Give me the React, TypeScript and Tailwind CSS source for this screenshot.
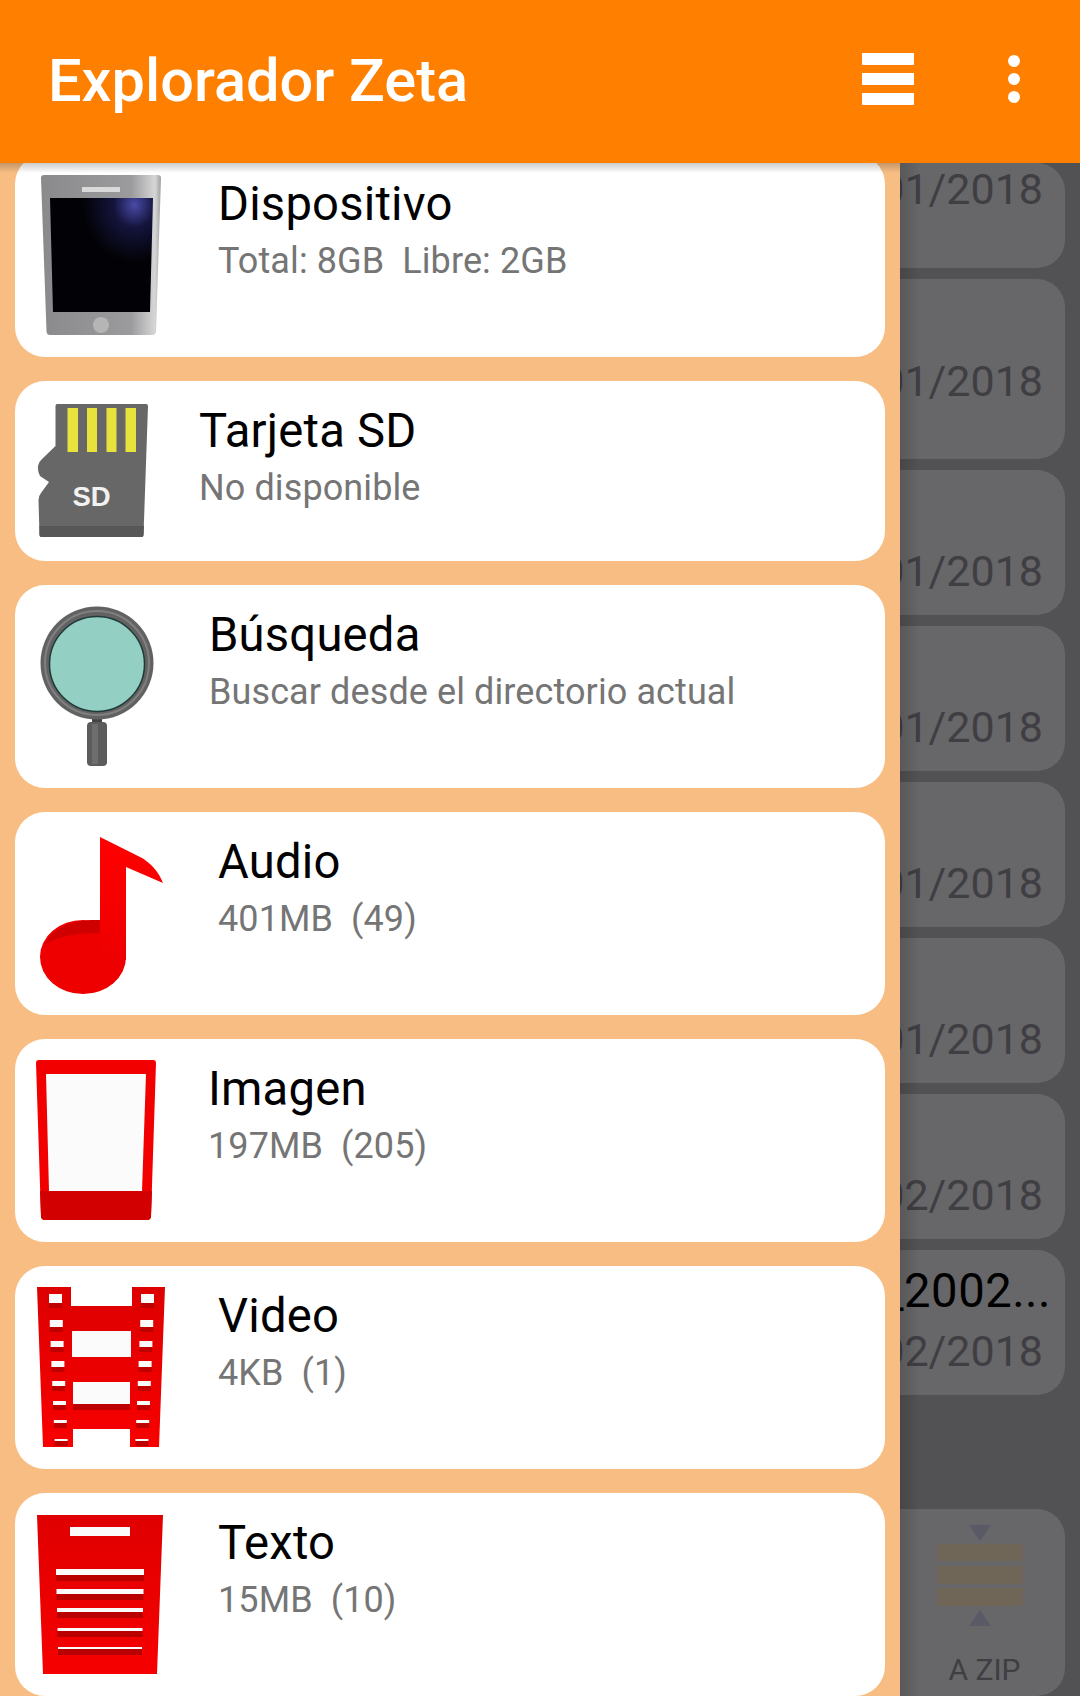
import React from 'react';

function PhoneIcon() {
  return (
    <svg viewBox="15 154 203 203" className="h-[203px] w-[203px] shrink-0">
      <defs>
        <linearGradient id="phoneBody" x1="0" y1="0" x2="1" y2="0">
          <stop offset="0" stopColor="#8a8a8c" />
          <stop offset="0.75" stopColor="#9b9b9d" />
          <stop offset="0.95" stopColor="#d6d6d6" />
          <stop offset="1" stopColor="#a0a0a0" />
        </linearGradient>
        <radialGradient id="phoneGlow" cx="0.82" cy="0.06" r="0.5">
          <stop offset="0" stopColor="#4a4aa8" />
          <stop offset="0.4" stopColor="#14143c" />
          <stop offset="1" stopColor="#020206" />
        </radialGradient>
      </defs>
      <path d="M44 175 H158 Q161 175 161 178 L156 331 Q156 335 152 335 H50 Q46.500 335 46.500 331 L41 178 Q41 175 44 175 Z" fill="url(#phoneBody)" />
      <path d="M50 198 H153 L150 312 H53 Z" fill="url(#phoneGlow)" />
      <rect x="82" y="187" width="38" height="5" fill="#d9d9d9" />
      <circle cx="101" cy="325" r="8" fill="#b5b5b5" />
    </svg>
  );
}

function SdIcon() {
  return (
    <svg viewBox="15 381 184 180" className="h-[180px] w-[184px] shrink-0">
      <path d="M57 404 H146 Q148 404 148 406 L143.500 535 Q143.500 537 141.500 537 H41.500 Q39.500 537 39.500 535 L38.500 500 Q38.500 496 41 493 L49 482 L40 476 Q37.500 472 38 466 Q38.500 462 42 459 L55.500 446 V406 Q55.500 404 57 404 Z" fill="#676767" />
      <path d="M39.500 526 H144 L143.500 535 Q143.500 537 141.500 537 H41.500 Q39.500 537 39.500 535 Z" fill="#575757" />
      <rect x="67.500" y="408" width="10.500" height="44" fill="#e8e33c" />
      <rect x="87" y="408" width="10" height="44" fill="#e8e33c" />
      <rect x="106.500" y="408" width="10" height="44" fill="#e8e33c" />
      <rect x="125.500" y="408" width="10.500" height="44" fill="#e8e33c" />
      <text x="91.500" y="506" textAnchor="middle" fontFamily="'Liberation Sans', sans-serif" fontWeight="700" fontSize="27.500" fill="#f2f2f2">SD</text>
    </svg>
  );
}

function SearchIcon() {
  return (
    <svg viewBox="15 585 194 203" className="h-[203px] w-[194px] shrink-0">
      <rect x="92" y="712" width="10" height="12" fill="#444" />
      <rect x="87" y="722" width="20" height="44" rx="4" fill="#5c5c5c" />
      <rect x="92" y="724" width="6" height="40" fill="#6e6e6e" />
      <circle cx="97" cy="663" r="56.500" fill="#626262" />
      <circle cx="97" cy="663" r="52" fill="none" stroke="#808080" strokeWidth="2" />
      <circle cx="97" cy="664" r="47.500" fill="#93cfc3" stroke="#1f3a38" strokeWidth="1.500" />
    </svg>
  );
}

function AudioIcon() {
  return (
    <svg viewBox="15 812 203 203" className="h-[203px] w-[203px] shrink-0">
      <defs>
        <linearGradient id="noteStem" x1="0" y1="0" x2="0" y2="1">
          <stop offset="0" stopColor="#ff0000" />
          <stop offset="1" stopColor="#ee0000" />
        </linearGradient>
      </defs>
      <ellipse cx="83" cy="957" rx="43" ry="37" fill="#ee0000" />
      <path d="M45 944 C54 926 76 919 100 920 V933 C78 933 58 936 45 944 Z" fill="#cf0000" />
      <path d="M100 837 L140 857 C150 862 159 872 163 883 L126 867 V960 H100 Z" fill="url(#noteStem)" />
    </svg>
  );
}

function ImageIcon() {
  return (
    <svg viewBox="15 1040 193 203" className="h-[203px] w-[193px] shrink-0">
      <path d="M39 1061 H153 Q156 1061 156 1064 L151 1217 Q151 1221 147 1221 H45 Q41 1221 41 1217 L36 1064 Q36 1061 39 1061 Z" fill="#f20000" />
      <path d="M40 1192 H152 L151 1217 Q151 1221 147 1221 H45 Q41 1221 41 1217 Z" fill="#d20000" />
      <path d="M46 1075 H146 L142 1192 H49 Z" fill="#fbfbfb" />
    </svg>
  );
}

const filmHoles = [
  [1295, 9], [1321, 7], [1342, 6], [1362, 6], [1382, 5], [1402, 4], [1421, 3], [1440, 2],
];

function VideoIcon() {
  return (
    <svg viewBox="15 1267 203 203" className="h-[203px] w-[203px] shrink-0">
      <defs>
        <linearGradient id="filmBody" x1="0" y1="0" x2="0" y2="1">
          <stop offset="0" stopColor="#dd0000" />
          <stop offset="1" stopColor="#f80000" />
        </linearGradient>
      </defs>
      <path d="M37 1288 H71 V1307 H132 V1288 H165 L159 1448 H130 V1430 H73 V1448 H43 Z" fill="url(#filmBody)" />
      <rect x="72" y="1332" width="59" height="26" fill="#fbfbfb" />
      <rect x="73" y="1383" width="57" height="22" fill="#fbfbfb" />
      <rect x="73" y="1405" width="57" height="6" fill="#bd0000" />
      {filmHoles.map(([y, h], i) => (
        <g key={y}>
          <rect x={49 + i * 0.8} y={y + h} width={13} height="5" fill="#bd0000" />
          <rect x={141 - i * 0.8} y={y + h} width={13} height="5" fill="#bd0000" />
          <rect x={49 + i * 0.8} y={y} width={13} height={h} fill="#fbfbfb" />
          <rect x={141 - i * 0.8} y={y} width={13} height={h} fill="#fbfbfb" />
        </g>
      ))}
    </svg>
  );
}

const textLines = [
  [1570, 6], [1590, 5], [1609, 4], [1629, 3], [1648, 2],
];

function TextIcon() {
  return (
    <svg viewBox="15 1494 203 203" className="h-[203px] w-[203px] shrink-0">
      <defs>
        <linearGradient id="textSheet" x1="0" y1="0" x2="0" y2="1">
          <stop offset="0" stopColor="#e00000" />
          <stop offset="1" stopColor="#f60000" />
        </linearGradient>
      </defs>
      <path d="M37 1516 H163 L157 1675 H43 Z" fill="url(#textSheet)" />
      <rect x="70" y="1528" width="60" height="9" fill="#fbfbfb" />
      {textLines.map(([y, h], i) => (
        <g key={y}>
          <rect x={56 + i * 0.5} y={y + h} width={88 - i} height="6" fill="#b80000" />
          <rect x={56 + i * 0.5} y={y} width={88 - i} height={h} fill="#fbfbfb" />
        </g>
      ))}
    </svg>
  );
}

interface DrawerItem {
  title: string;
  subtitle: string;
  icon: React.ReactNode;
  rowClass: string;
}

const drawerItems: DrawerItem[] = [
  { title: 'Dispositivo', subtitle: 'Total: 8GB  Libre: 2GB', icon: <PhoneIcon />, rowClass: 'h-[203px]' },
  { title: 'Tarjeta SD', subtitle: 'No disponible', icon: <SdIcon />, rowClass: 'h-[180px]' },
  { title: 'Búsqueda', subtitle: 'Buscar desde el directorio actual', icon: <SearchIcon />, rowClass: 'h-[203px]' },
  { title: 'Audio', subtitle: '401MB  (49)', icon: <AudioIcon />, rowClass: 'h-[203px]' },
  { title: 'Imagen', subtitle: '197MB  (205)', icon: <ImageIcon />, rowClass: 'h-[203px]' },
  { title: 'Video', subtitle: '4KB  (1)', icon: <VideoIcon />, rowClass: 'h-[203px]' },
  { title: 'Texto', subtitle: '15MB  (10)', icon: <TextIcon />, rowClass: 'h-[203px]' },
];

function DrawerRow({ item }: { item: DrawerItem }) {
  return (
    <div className={`flex shrink-0 rounded-[30px] bg-white ${item.rowClass}`}>
      {item.icon}
      <div className="flex flex-col pt-[20px]">
        <div className="text-[47.2px] leading-[60px] tracking-[0.2px] text-black whitespace-pre">{item.title}</div>
        <div className="text-[36px] leading-[54px] tracking-[0.1px] text-[#757575] whitespace-pre">{item.subtitle}</div>
      </div>
    </div>
  );
}

function DateCard({ date, heightClass, title }: { date: string; heightClass: string; title?: string }) {
  return (
    <div className={`flex shrink-0 flex-col items-end justify-end overflow-hidden rounded-r-[28px] bg-[#676669] pr-[22px] ${heightClass}`}>
      {title && <div className="-mr-[8px] mb-[2px] text-[47.2px] leading-[60px] tracking-[0.5px] text-black whitespace-pre">{title}</div>}
      <div className="mt-[3px] text-[43px] leading-[50px] text-[#3f3e42] whitespace-pre">{date}</div>
    </div>
  );
}

function ZipCard() {
  return (
    <div className="flex h-[187px] shrink-0 flex-col items-center rounded-r-[28px] bg-[#676669] pr-[5px] pt-[16px]">
      <svg viewBox="0 0 86 102" className="h-[102px] w-[86px] shrink-0">
        <path d="M32 0 H54 L43 16 Z" fill="#5a5a66" />
        <rect x="0" y="19" width="86" height="17" fill="#6f6657" />
        <rect x="0" y="41" width="86" height="18" fill="#6f6657" />
        <rect x="0" y="63" width="86" height="18" fill="#6f6657" />
        <path d="M32 101 H54 L43 85 Z" fill="#5a5a66" />
      </svg>
      <div className="ml-[9px] mt-[25px] text-[30px] leading-[36px] text-[#3f3e42]">A ZIP</div>
    </div>
  );
}

export default function App() {
  return (
    <div className="flex h-[1696px] w-[1080px] flex-col overflow-hidden bg-[#525154] font-['Roboto',sans-serif]">
      {/* barra superior */}
      <header className="relative z-10 flex h-[163px] shrink-0 items-center bg-[#ff8000] pl-[48px]">
        <h1 className="text-[59.5px] font-medium leading-none text-white">Explorador Zeta</h1>
        <div className="ml-auto mt-[53px] flex w-[52px] flex-col gap-[8px] self-start">
          <span className="h-[12px] bg-white" />
          <span className="h-[12px] bg-white" />
          <span className="h-[12px] bg-white" />
        </div>
        <div className="ml-[94px] mr-[60px] mt-[55px] flex flex-col gap-[6px] self-start">
          <span className="h-[12px] w-[12px] rounded-full bg-white" />
          <span className="h-[12px] w-[12px] rounded-full bg-white" />
          <span className="h-[12px] w-[12px] rounded-full bg-white" />
        </div>
      </header>

      <div className="flex min-h-0 flex-1">
        {/* panel lateral */}
        <aside className="relative flex w-[900px] shrink-0 flex-col overflow-hidden bg-[#f7bd83]">
          <div className="absolute inset-x-0 top-0 z-10 h-[10px] bg-gradient-to-b from-black/20 to-transparent" />
          <div className="-mt-[9px] flex flex-col gap-[24px] pl-[15px] pr-[15px]">
            {drawerItems.map((item) => (
              <DrawerRow key={item.title} item={item} />
            ))}
          </div>
        </aside>

        {/* lista detrás del panel */}
        <div className="relative flex min-w-0 flex-1 flex-col overflow-hidden pr-[15px]">
          <div className="absolute inset-y-0 left-0 z-10 w-[20px] bg-gradient-to-r from-black/15 to-transparent" />
          <div className="flex flex-col gap-[11px]">
            <DateCard date="01/2018" heightClass="h-[105px] pb-[54px]" />
            <DateCard date="01/2018" heightClass="h-[180px] pb-[53px]" />
            <DateCard date="01/2018" heightClass="h-[145px] pb-[19px]" />
            <DateCard date="01/2018" heightClass="h-[145px] pb-[19px]" />
            <DateCard date="01/2018" heightClass="h-[145px] pb-[19px]" />
            <DateCard date="01/2018" heightClass="h-[145px] pb-[19px]" />
            <DateCard date="02/2018" heightClass="h-[145px] pb-[19px]" />
            <DateCard date="02/2018" title="_2002..." heightClass="h-[145px] pb-[19px]" />
          </div>
          <div className="mt-[114px]">
            <ZipCard />
          </div>
        </div>
      </div>
    </div>
  );
}
